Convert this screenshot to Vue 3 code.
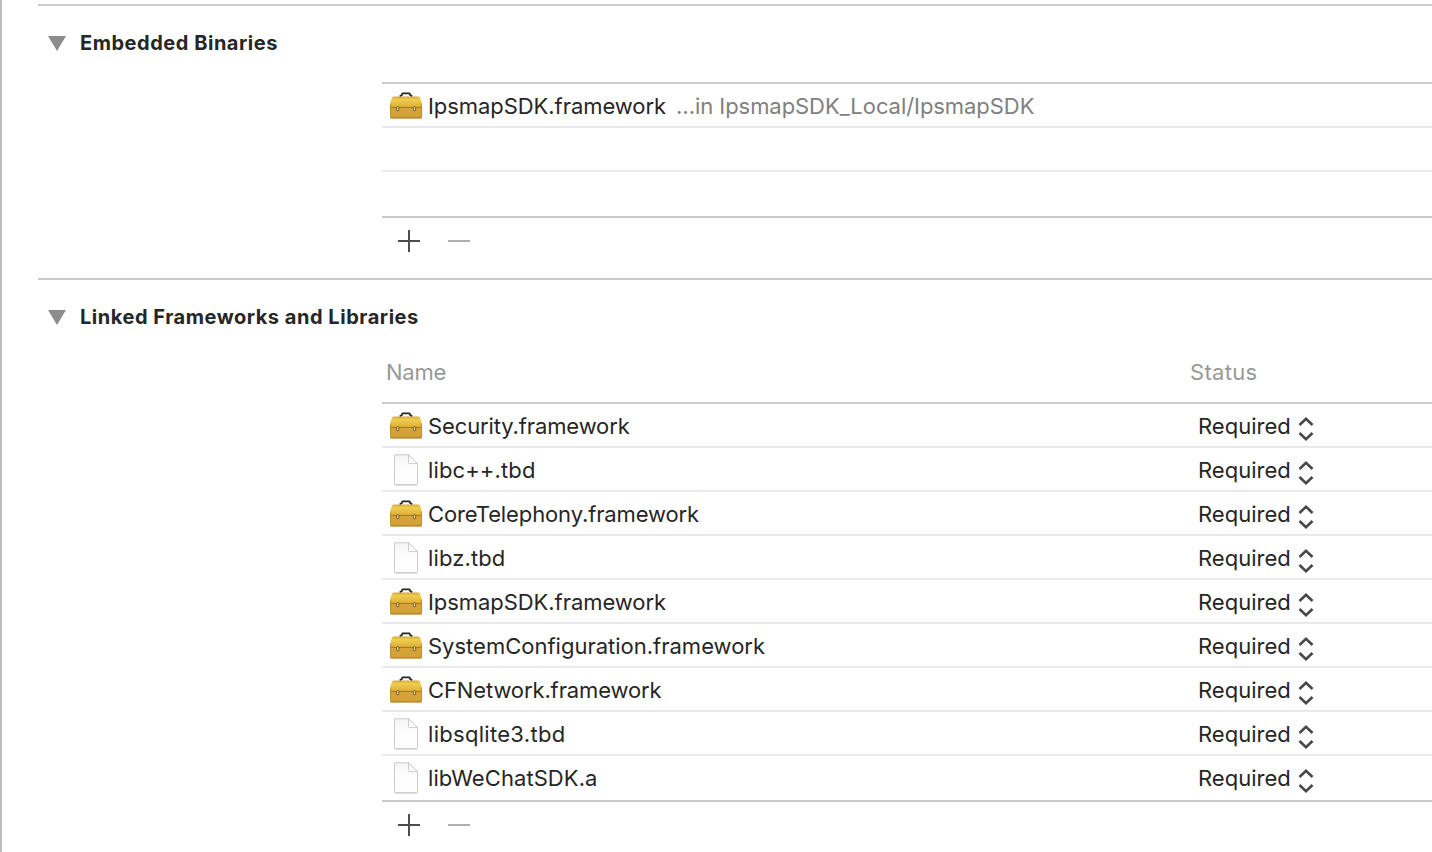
<script setup>
const embedded = [{ name: 'IpsmapSDK.framework', kind: 'kit', path: '…in IpsmapSDK_Local/IpsmapSDK', fit: 'snug' }, null, null]
const linked = [
  { name: 'Security.framework', kind: 'kit', fit: 'tight' },
  { name: 'libc++.tbd', kind: 'doc', fit: 'loose' },
  { name: 'CoreTelephony.framework', kind: 'kit', fit: 'tight' },
  { name: 'libz.tbd', kind: 'doc', fit: 'loose' },
  { name: 'IpsmapSDK.framework', kind: 'kit', fit: 'snug' },
  { name: 'SystemConfiguration.framework', kind: 'kit' },
  { name: 'CFNetwork.framework', kind: 'kit', fit: 'tight' },
  { name: 'libsqlite3.tbd', kind: 'doc', fit: 'wide' },
  { name: 'libWeChatSDK.a', kind: 'doc', fit: 'soft' },
]
const sections = [
  { id: 'embedded', title: 'Embedded Binaries', rows: embedded },
  { id: 'linked', title: 'Linked Frameworks and Libraries', rows: linked, columns: true },
]
</script>

<template>
  <main class="pane">
    <svg class="defs" width="0" height="0" aria-hidden="true">
      <defs>
        <linearGradient id="lid" x1="0" y1="0" x2="0" y2="1">
          <stop offset="0" stop-color="#cfa938" />
          <stop offset=".3" stop-color="#efcd50" />
          <stop offset="1" stop-color="#dcae34" />
        </linearGradient>
        <linearGradient id="body" x1="0" y1="0" x2="0" y2="1">
          <stop offset="0" stop-color="#d9a438" />
          <stop offset="1" stop-color="#d0a036" />
        </linearGradient>
        <linearGradient id="paper" x1="0" y1="0" x2="0" y2="1">
          <stop offset="0" stop-color="#f5f5f5" />
          <stop offset=".5" stop-color="#fefefe" />
        </linearGradient>
        <symbol id="kit" viewBox="0 0 32 28">
          <path d="M10.4 5.2V3.6H12" fill="none" stroke="#2b2925" stroke-width="1.5" />
          <path d="M21.6 5.2V3.6H20" fill="none" stroke="#2b2925" stroke-width="1.5" />
          <path d="M11.6 3.7L12.4 1.4H19.6L20.4 3.7" fill="none" stroke="#2b2925" stroke-width="1.7" stroke-linejoin="round" />
          <path d="M4 4.4H28Q29.7 4.4 30.2 6L31.8 11.4V15.4H.2V11.4L1.8 6Q2.3 4.4 4 4.4Z" fill="url(#lid)" />
          <path d="M.2 15.2H31.8V25.3Q31.8 26.4 30.7 26.4H1.3Q.2 26.4 .2 25.3Z" fill="url(#body)" />
          <path d="M.2 15.4H31.8" stroke="#a8741e" stroke-width="1" />
          <path d="M.6 25.9H31.4" stroke="#a9782a" stroke-width=".9" />
          <path d="M.5 11.6V25.5M31.5 11.6V25.5" stroke="#b3822c" stroke-width=".7" />
          <g fill="#ddd2ac" stroke="#69501e" stroke-width=".9">
            <rect x="6.5" y="14.6" width="2.4" height="4.2" rx="1.2" />
            <rect x="23.3" y="14.6" width="2.4" height="4.2" rx="1.2" />
          </g>
        </symbol>
        <symbol id="doc" viewBox="0 0 26 32">
          <path d="M2 31.1H24" stroke="#bcbcbc" stroke-width="1" opacity=".7" />
          <path d="M1.5 .8H15.5L24.5 9.5V29.8Q24.5 30.6 23.7 30.6H2.3Q1.5 30.6 1.5 29.8Z" fill="url(#paper)" stroke="#c6c6c6" stroke-width=".9" />
          <path d="M15.5 .9V8.6Q15.5 9.5 16.4 9.5H24.4Z" fill="#fff" stroke="#c6c6c6" stroke-width=".9" />
        </symbol>
      </defs>
    </svg>

    <section v-for="s in sections" :key="s.id" class="section" :class="s.id">
      <header class="title">
        <svg class="disclosure" width="18" height="15" viewBox="0 0 18 15"><path d="M0 0H18L9 15Z" fill="#8c8c8c" /></svg>
        <h2>{{ s.title }}</h2>
      </header>
      <div class="content">
        <div v-if="s.columns" class="columns">
          <span class="name-col">Name</span><span class="status-col">Status</span>
        </div>
        <ul class="table">
          <li v-for="(r, i) in s.rows" :key="i" class="row">
            <template v-if="r">
              <span class="file">
                <svg v-if="r.kind === 'kit'" class="kit" width="32" height="28"><use href="#kit" /></svg>
                <svg v-else class="doc" width="26" height="32"><use href="#doc" /></svg>
                <span class="name" :class="r.fit">{{ r.name }}</span>
                <span v-if="r.path" class="path">{{ r.path }}</span>
              </span>
              <span v-if="s.columns" class="status">
                <span class="req">Required</span>
                <svg class="chev" width="16" height="26" viewBox="0 0 16 26" fill="none" stroke="#484848" stroke-width="2.6">
                  <path d="M1.5 9 8 2.7 14.5 9M1.5 17 8 23.3 14.5 17" />
                </svg>
              </span>
            </template>
          </li>
        </ul>
        <footer class="actions">
          <svg width="22" height="22"><path d="M0 11H22M11 0V22" stroke="#4d4d4d" stroke-width="2" /></svg>
          <svg width="22" height="22"><path d="M0 11H22" stroke="#b0b0b0" stroke-width="2" /></svg>
        </footer>
      </div>
    </section>
  </main>
</template>

<style>
body { background: #fff; overflow: hidden; }
</style>

<style scoped>
.pane {
  box-sizing: border-box;
  width: 100%;
  height: 852px;
  overflow: hidden;
  padding: 4px 0 0 36px;
  border-left: 2px solid #bdbdbd;
  background: #fff;
  font-family: Inter, "Liberation Sans", sans-serif;
  font-size: 22px;
  color: #262626;
}
.defs { position: absolute; }
.section { border-top: 2px solid #cacaca; }
.title { display: flex; align-items: center; height: 76px; box-sizing: border-box; padding: 0 0 2px 10px; }
.linked .title { height: 74px; padding-bottom: 0; }
.disclosure { margin-right: 14px; }
h2 { margin: 0; font-size: 20px; font-weight: 700; line-height: 28px; letter-spacing: 0.53px; white-space: nowrap; }
.content { margin-left: 344px; }
.columns { display: flex; height: 48px; line-height: 36px; color: #999; }
.name-col { box-sizing: border-box; width: 804px; padding-left: 4px; letter-spacing: -0.25px; }
.status-col { padding-left: 4px; letter-spacing: 0.3px; }
.table { list-style: none; margin: 0; padding: 0; border-top: 2px solid #cacaca; }
.row { box-sizing: border-box; height: 44px; border-bottom: 2px solid #e8e8e8; display: flex; white-space: nowrap; }
.row:last-child { height: 46px; border-bottom-color: #cacaca; }
.file { display: flex; align-items: center; width: 816px; height: 44px; padding-left: 8px; box-sizing: border-box; }
.kit { margin-right: 6px; }
.doc { margin: 0 9px 0 3px; }
.tight { letter-spacing: -0.12px; }
.snug { letter-spacing: -0.06px; }
.soft { letter-spacing: 0.07px; }
.loose { letter-spacing: 0.12px; }
.wide { letter-spacing: 0.3px; }
.path { color: #808080; margin-left: 10px; letter-spacing: -0.06px; }
.status { display: flex; align-items: center; height: 44px; }
.chev { margin: 6px 0 0 7px; }
.actions { display: flex; gap: 28px; padding: 12px 0 26px 16px; }
.actions svg { display: block; }
</style>
